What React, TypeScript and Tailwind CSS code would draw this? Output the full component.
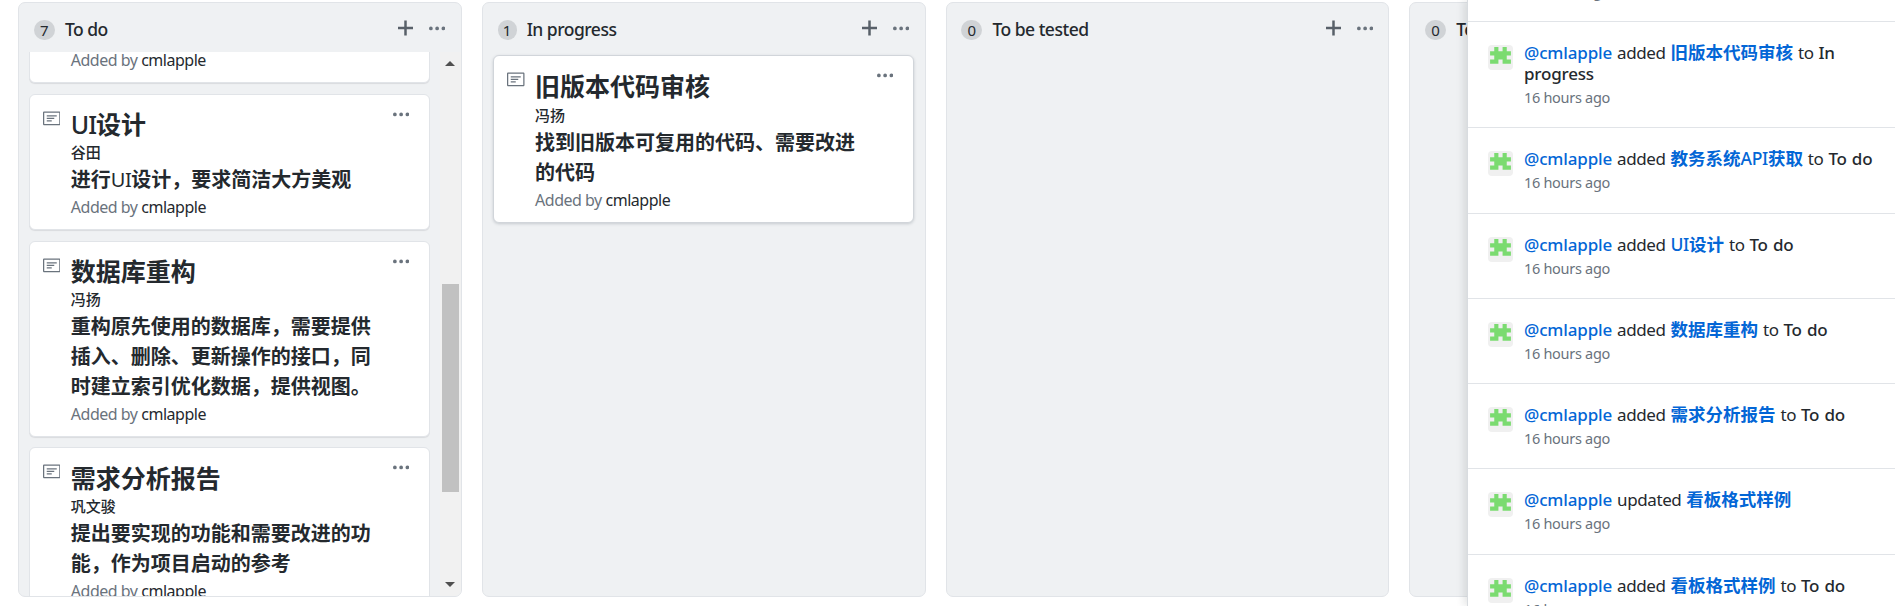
import React from "react";

const CJK = 'font-["Noto_Sans_CJK_SC",sans-serif]';

function PlusIcon() {
  return (
    <svg viewBox="0 0 12 16" className="h-5 w-[15px] fill-[#586069]">
      <path d="M12 9H7v5H5V9H0V7h5V2h2v5h5v2z" />
    </svg>
  );
}

function DotsIcon() {
  return (
    <svg viewBox="0 0 13 16" className="h-5 w-[16.25px] fill-[#6a737d]">
      <path d="M1.5 9a1.5 1.5 0 100-3 1.5 1.5 0 000 3zm5 0a1.5 1.5 0 100-3 1.5 1.5 0 000 3zM13 7.5a1.5 1.5 0 11-3 0 1.5 1.5 0 013 0z" />
    </svg>
  );
}

function NoteIcon() {
  return (
    <svg viewBox="0 0 14 16" className="h-5 w-[17.5px] fill-[#6a737d]">
      <path
        fillRule="evenodd"
        d="M3 10h4V9H3v1zm0-2h6V7H3v1zm0-2h8V5H3v1zm10 6H1V3h12v9zM1 2c-.55 0-1 .45-1 1v9c0 .55.45 1 1 1h12c.55 0 1-.45 1-1V3c0-.55-.45-1-1-1H1z"
      />
    </svg>
  );
}

function Avatar() {
  return (
    <svg viewBox="0 0 420 420" className="mt-[4px] size-[25px] shrink-0 rounded-[4px] bg-[#f0f0f0] fill-[#7bdb70]">
      <path d="M105 35h70v70h70V35h70v70h70v70h-70v70h70v70H245v-70h-70v70H35v-70h70v-70H35v-70h70z" />
    </svg>
  );
}

/* Latin runs inside Chinese headings are set lighter than the characters around them. */
function Mixed({ text, latin }: { text: string; latin: string }) {
  return (
    <>
      {text.split(/([A-Za-z]+)/).map((part, i) =>
        i % 2 ? (
          <span key={i} className={latin}>
            {part}
          </span>
        ) : (
          part
        ),
      )}
    </>
  );
}

function AddedBy() {
  return (
    <p className="h-[24.4px] text-base leading-[24.4px] tracking-[-0.48px] text-[#6a737d]">
      Added by <span className="text-[#24292e]">cmlapple</span>
    </p>
  );
}

interface NoteProps {
  title: string;
  owner: string;
  body: string;
  active?: boolean;
}

function NoteCard({ title, owner, body, active }: NoteProps) {
  const edge = active
    ? "border-[#d1d5da] shadow-[0_1px_3px_rgba(106,115,125,0.3)]"
    : "border-[#e1e4e8] shadow-[0_1px_1px_rgba(27,31,35,0.1)]";
  return (
    <article className={`flex shrink-0 items-start rounded-[6px] border bg-white pr-5 pl-[12.8px] pb-[9.5px] ${edge}`}>
      <div className="w-[27.8px] shrink-0 pt-[14px]">
        <NoteIcon />
      </div>
      <div className={`min-w-0 flex-1 pr-[14px] ${active ? "pt-[11px]" : "pt-[10.2px]"}`}>
        <h3 className={`${CJK} h-[36.5px] text-[25px] leading-[37.5px] font-bold`}>
          <Mixed text={title} latin='font-["Noto_Sans"] font-medium tracking-[-1px]' />
        </h3>
        <h6 className={`${CJK} h-[23px] text-[15px] leading-[22px] font-medium`}>{owner}</h6>
        <p className={`${CJK} mb-[1.2px] text-xl leading-[30px] font-bold`}>
          <Mixed text={body} latin='font-["Noto_Sans"] font-normal leading-none tracking-[-0.5px]' />
        </p>
        <AddedBy />
      </div>
      <div className="pt-[10px]">
        <DotsIcon />
      </div>
    </article>
  );
}

function Column({ count, name, children }: { count: number; name: string; children?: React.ReactNode }) {
  return (
    <section className="flex h-[594.5px] w-[443.75px] shrink-0 flex-col overflow-hidden rounded-[7px] border border-[#e1e4e8] bg-[#eff1f3]">
      <header className="flex h-[49px] shrink-0 items-start pr-[15.5px] pl-[14.7px]">
        <span
          className={`mt-[17px] flex h-5 items-center justify-center rounded-full bg-[#d0d3d6] text-[15px] leading-5 ${
            count === 1 ? "w-[19px]" : "w-[21px]"
          }`}
        >
          {count}
        </span>
        <h2 className="mt-[13.4px] ml-[10px] flex-1 text-[17.5px] leading-[26px] font-medium tracking-[-0.5px]">{name}</h2>
        <div className="mt-[15px] mr-4">
          <PlusIcon />
        </div>
        <div className="mt-4">
          <DotsIcon />
        </div>
      </header>
      {children}
    </section>
  );
}

function Scrollbar() {
  return (
    <div className="flex w-[20.5px] shrink-0 flex-col items-center bg-[#f1f1f1] pt-[9px] pr-px pb-[8.5px]">
      <svg viewBox="0 0 10 5" className="h-[5px] w-[10px] fill-[#505050]">
        <path d="M5 0l5 5H0z" />
      </svg>
      <div className="mt-[218px] h-[208px] w-[17px] bg-[#c1c1c1]" />
      <svg viewBox="0 0 10 5" className="mt-auto h-[5px] w-[10px] fill-[#505050]">
        <path d="M0 0h10L5 5z" />
      </svg>
    </div>
  );
}

interface EventProps {
  verb: string;
  card: string;
  to?: string;
  height: string;
}

function Event({ verb, card, to, height }: EventProps) {
  return (
    <li className={`flex shrink-0 border-t border-[#e1e4e8] pt-[19px] pl-5 ${height}`}>
      <Avatar />
      <div className="ml-[11px] w-[356px]">
        <p className="text-[17px] leading-[21px] tracking-[-0.4px] [word-spacing:0.9px]">
          <a className="font-medium tracking-[-0.15px] text-[#0366d6]">@cmlapple</a> {verb}{" "}
          <a className={`${CJK} inline-block text-[17.5px] leading-[21px] font-bold tracking-normal text-[#0366d6]`}>
            <Mixed text={card} latin='font-["Noto_Sans"] font-medium leading-none tracking-[-0.3px]' />
          </a>
          {to && (
            <>
              {" "}
              to <span className="font-medium tracking-[-0.2px]">{to}</span>
            </>
          )}
        </p>
        <p className="mt-[0.6px] text-[14.5px] leading-6 tracking-[-0.3px] text-[#6a737d]">16 hours ago</p>
      </div>
    </li>
  );
}

const events: EventProps[] = [
  { verb: "added", card: "旧版本代码审核", to: "In progress", height: "h-[106px]" },
  { verb: "added", card: "教务系统API获取", to: "To do", height: "h-[86px]" },
  { verb: "added", card: "UI设计", to: "To do", height: "h-[85px]" },
  { verb: "added", card: "数据库重构", to: "To do", height: "h-[85px]" },
  { verb: "added", card: "需求分析报告", to: "To do", height: "h-[85px]" },
  { verb: "updated", card: "看板格式样例", height: "h-[86px]" },
  { verb: "added", card: "看板格式样例", to: "To do", height: "h-[86px]" },
];

export default function App() {
  return (
    <div className='relative h-[606px] w-[1895px] overflow-hidden bg-white font-["Noto_Sans","Noto_Sans_CJK_SC",sans-serif] text-[#24292e]'>
      <main className="flex gap-5 pt-[2px] pl-[18.2px]">
        <Column count={7} name="To do">
          <div className="flex min-h-0 flex-1 pl-[10px]">
            <div className="mr-[10px] flex min-w-0 flex-1 flex-col gap-[10.2px] overflow-hidden pb-1">
              <article className="-mt-[5px] shrink-0 rounded-b-[6px] border border-[#e1e4e8] bg-white pb-[10px] pl-[40.5px] shadow-[0_1px_1px_rgba(27,31,35,0.1)]">
                <AddedBy />
              </article>
              <NoteCard title="UI设计" owner="谷田" body="进行UI设计，要求简洁大方美观" />
              <NoteCard
                title="数据库重构"
                owner="冯扬"
                body="重构原先使用的数据库，需要提供插入、删除、更新操作的接口，同时建立索引优化数据，提供视图。"
              />
              <NoteCard title="需求分析报告" owner="巩文骏" body="提出要实现的功能和需要改进的功能，作为项目启动的参考" />
            </div>
            <Scrollbar />
          </div>
        </Column>
        <Column count={1} name="In progress">
          <div className="pt-[3.4px] pr-[10.5px] pl-[10.5px]">
            <NoteCard active title="旧版本代码审核" owner="冯扬" body="找到旧版本可复用的代码、需要改进的代码" />
          </div>
        </Column>
        <Column count={0} name="To be tested" />
        <Column count={0} name="Tested" />
      </main>
      <aside className="absolute top-0 right-0 bottom-0 w-[428px] overflow-hidden border-l border-[#d8dce0] bg-white shadow-[-3px_0_8px_rgba(27,31,35,0.12)]">
        <p className="-mt-[21px] h-[42px] pl-[56px] text-[14.5px] leading-6 tracking-[-0.3px] text-[#6a737d]">16 hours ago</p>
        <ul className="flex flex-col">
          {events.map((event, i) => (
            <Event key={i} {...event} />
          ))}
        </ul>
      </aside>
    </div>
  );
}
